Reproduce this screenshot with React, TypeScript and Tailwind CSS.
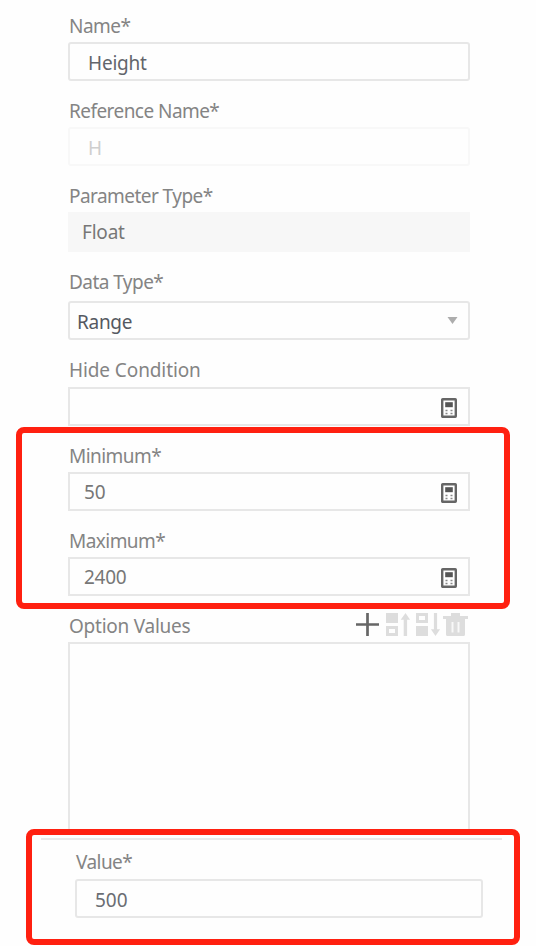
import type { ReactNode } from "react";
import clsx from "clsx";

interface FieldProps {
  label: string;
  labelClass?: string;
  boxClass?: string;
  children?: ReactNode;
}

function CalculatorIcon() {
  return (
    <svg width="16" height="20" viewBox="0 0 16 20" fill="none">
      <rect x="1.2" y="1.2" width="13.600" height="17.600" rx="0.5" fill="#fff" stroke="#666" strokeWidth="2.4" />
      <rect x="4.200" y="4.200" width="7.600" height="5" fill="#555" />
      <path d="M4.5 12.5h2M9.5 12.5h2M4.5 15.500h2M9.5 15.500h2" stroke="#888" strokeWidth="1.6" />
    </svg>
  );
}

function ToolbarIcons() {
  return (
    <svg className="mr-px mb-[3px]" width="114" height="26" viewBox="0 0 114 26" fill="none">
      {/* add */}
      <path d="M1 12.5h23M12.5 1v23" stroke="#666" strokeWidth="2.7" />
      {/* move up */}
      <path d="M31 1h12v10H31zM50.5 1l4.6 6.8h-3V24h-3.4V7.8h-3z" fill="#ddd" />
      <path d="M32.5 15.5h9v7h-9z" stroke="#ddd" strokeWidth="3" />
      {/* move down */}
      <path d="M62.5 2.5h9v7h-9z" stroke="#ddd" strokeWidth="3" />
      <path d="M61 14h12v10H61zM80.5 24l-4.6-6.8h3V1h3.2v16.2h3z" fill="#ddd" />
      {/* delete */}
      <path
        d="M96 1h9v3h8v3h-3v15.5q0 1.5-1.5 1.5h-16q-1.500 0-1.500-1.500V7h-3V4h8z"
        fill="#ddd"
      />
      <path d="M97.5 10v10.5M103.5 10v10.5" stroke="#fff" strokeWidth="2" opacity="0.8" />
    </svg>
  );
}

function Field({ label, labelClass, boxClass, children }: FieldProps) {
  return (
    <div>
      <div
        className={clsx(
          "h-8 pl-px leading-8 text-[#848484]",
          label.endsWith("*") ? "tracking-[-0.55px]" : "tracking-[-0.1px]",
          labelClass
        )}
      >
        {label}
      </div>
      <div
        className={clsx(
          "flex items-center border-2",
          boxClass ?? "h-[39px] border-[#e7e7e7] pt-[2px] pl-[14px] pr-[11px]"
        )}
      >
        {children}
      </div>
    </div>
  );
}

export default function App() {
  return (
    <div className="h-[946px] w-[536px] overflow-hidden bg-[#fefefe] pt-[10px] font-['Noto_Sans',sans-serif] text-[19px] whitespace-nowrap">
      <div className="ml-[68px] flex w-[402px] flex-col gap-[14px]">
        <Field
          label="Name*"
          boxClass="h-[39px] rounded-[3px] border-[#e7e7e7] pt-[3px] pl-[18px] tracking-[-0.2px] text-[#62656b]"
        >
          Height
        </Field>
        <Field
          label="Reference Name*"
          boxClass="h-[39px] rounded-[3px] border-[#f8f8f8] pt-[3px] pl-[18px] text-[#cfcfcf]"
        >
          H
        </Field>
        <Field
          label="Parameter Type*"
          boxClass="h-[40px] border-[#f7f7f7] bg-[#f7f7f7] pl-[12px] tracking-[-0.2px] text-[#777]"
        >
          Float
        </Field>
        <Field
          label="Data Type*"
          labelClass="mb-[3px]"
          boxClass="h-[39px] justify-between rounded-[3px] border-[#e7e7e7] pl-[7px] pr-[10px] text-[#555961]"
        >
          <span className="pt-[3px] tracking-[-0.3px]">Range</span>
          <svg width="11" height="7" viewBox="0 0 11 7">
            <path d="M0.500 0h10L5.5 7z" fill="#adadad" />
          </svg>
        </Field>
        <Field label="Hide Condition" labelClass="mb-px">
          <span className="ml-auto">
            <CalculatorIcon />
          </span>
        </Field>

        <div className="relative flex flex-col gap-[14px] text-[#777]">
          <Field label="Minimum*">
            <span className="flex-1">50</span>
            <CalculatorIcon />
          </Field>
          <Field label="Maximum*">
            <span className="flex-1 tracking-[-0.3px]">2400</span>
            <CalculatorIcon />
          </Field>
          <div className="absolute -top-[13px] -left-[52px] h-[182px] w-[494px] rounded-lg border-6 border-[#ff2010]" />
        </div>

        <div>
          <div className="flex h-8 items-center justify-between pl-px leading-8 text-[#848484]">
            <span className="tracking-[-0.25px]">Option Values</span>
            <ToolbarIcons />
          </div>
          <div className="h-[187px] border-2 border-b-0 border-[#e7e7e7]" />
        </div>
      </div>

      <div className="ml-[26px] h-[116px] w-[494px] rounded-lg border-6 border-[#ff2010] pt-[3px]">
        <div className="ml-[9px] h-[2px] w-[461px] bg-[#e9e9e9]" />
        <div className="mt-[6px] ml-[43px] w-[408px]">
          <Field
            label="Value*"
            labelClass="mb-px"
            boxClass="h-[39px] rounded-[3px] border-[#e7e7e7] pt-[3px] pl-[18px] text-[#6a6d73]"
          >
            500
          </Field>
        </div>
      </div>
    </div>
  );
}
